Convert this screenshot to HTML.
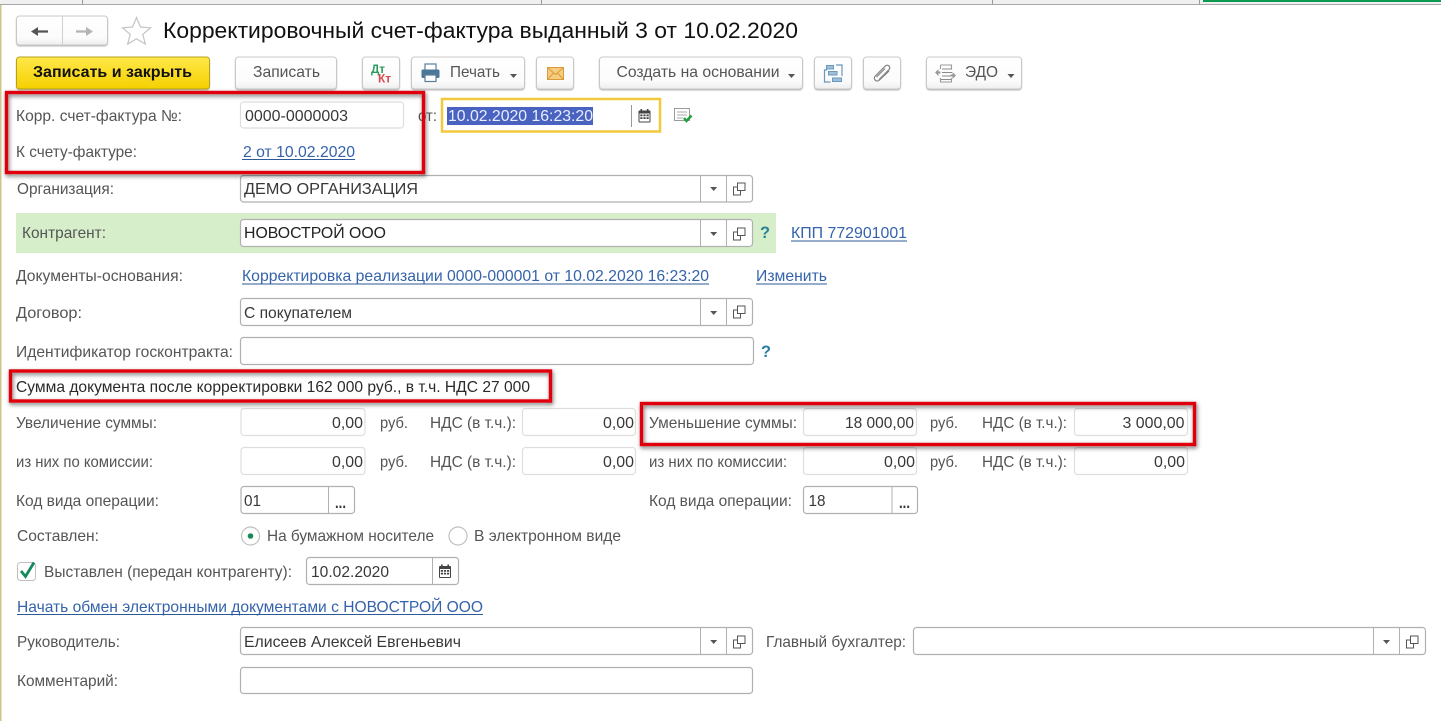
<!DOCTYPE html>
<html><head><meta charset="utf-8"><style>
html,body{margin:0;padding:0;background:#fff;overflow:hidden}
svg{display:block}
text{font-family:"Liberation Sans",sans-serif;font-size:16px;fill:#555}
.v{fill:#383838}
.l{fill:#3563ab}
.f{fill:#fff;stroke:#b0b0b0;stroke-width:1.200}
.n{fill:#fff;stroke:#dedede;stroke-width:1.200}
.b{fill:url(#bt);stroke:#c8c8c8;stroke-width:1}
.d{stroke:#b0b0b0;stroke-width:1}
.u{stroke:#2c5a98;stroke-width:1}
.r{fill:none;stroke:#e0000f;stroke-width:3.4;filter:url(#sh)}
</style></head><body>
<svg width="1441" height="721" viewBox="0 0 1441 721" xmlns="http://www.w3.org/2000/svg">
<defs>
<linearGradient id="bt" x1="0" y1="0" x2="0" y2="1"><stop offset="0" stop-color="#fff"/><stop offset=".75" stop-color="#fbfbfb"/><stop offset="1" stop-color="#eee"/></linearGradient>
<linearGradient id="ye" x1="0" y1="0" x2="0" y2="1"><stop offset="0" stop-color="#ffe84a"/><stop offset="1" stop-color="#f5d000"/></linearGradient>
<filter id="sh" x="-5%" y="-30%" width="110%" height="160%"><feDropShadow dx="1" dy="2" stdDeviation="2.2" flood-color="#000" flood-opacity=".55"/></filter>
<filter id="bs" x="-10%" y="-10%" width="120%" height="130%"><feDropShadow dx="0" dy="1" stdDeviation=".5" flood-color="#000" flood-opacity=".28"/></filter>
<g id="dd"><path d="M-3.500 0h7l-3.500 4z" fill="#555"/></g>
<g id="op" fill="none" stroke="#555" stroke-width="1"><rect x="4.500" y="-6" width="7.500" height="7.500" fill="#fff"/><path d="M4.500 -2H.5V6H7.500V1.500"/></g>
<g id="cal"><rect x="-6" y="-5.500" width="12" height="12" rx="1" fill="#444"/><rect x="-4" y="-7" width="1.600" height="3" fill="#444"/><rect x="2.400" y="-7" width="1.600" height="3" fill="#444"/><path d="M-5 -2.500h10v8h-10z" fill="#fff"/><path d="M-4.200 -1.500h2.200v1.800h-2.200zM-1.100 -1.500h2.200v1.800h-2.200zM2 -1.500h2.200v1.800h-2.200zM-4.200 1.200h2.200v1.800h-2.200zM-1.100 1.200h2.200v1.800h-2.200zM2 1.200h2.200v1.800h-2.200z" fill="#444"/></g>
</defs>

<!-- top strip -->
<rect x="0" y="0" width="1441" height="4" fill="#f0f0f0"/>
<rect x="0" y="4" width="1441" height="1" fill="#a6a6a6"/>
<rect x="82" y="0" width="1" height="4" fill="#999"/><rect x="541" y="0" width="1" height="4" fill="#999"/><rect x="992" y="0" width="1" height="4" fill="#999"/><rect x="1199" y="0" width="1" height="4" fill="#999"/>
<rect x="1203" y="0" width="238" height="2" fill="#0d9a50"/>
<rect x="0" y="5" width="1.500" height="716" fill="#cfc48c"/>

<!-- nav -->
<rect class="b" x="16.500" y="16" width="91" height="29" rx="3" filter="url(#bs)"/>
<line x1="62.500" y1="16" x2="62.500" y2="45" stroke="#d0d0d0"/>
<path d="M31 31.500l7-4.500v3.400h10v2.200h-10v3.400z" fill="#555"/>
<path d="M93 31.500l-7-4.500v3.400h-10v2.200h10v3.400z" fill="#b4b4b4"/>
<path d="M136.500 17.500l4 9.500 10 .8-7.700 6.500 2.500 9.700-8.800-5.200-8.800 5.200 2.500-9.700-7.700-6.500 10-.8z" fill="#fff" stroke="#c4c4c4" stroke-width="1.200"/>
<text x="163" y="38" style="font-size:22.500px;fill:#111" textLength="635" lengthAdjust="spacingAndGlyphs">Корректировочный счет-фактура выданный 3 от 10.02.2020</text>

<!-- toolbar -->
<rect x="16.500" y="57" width="193" height="32" rx="3" fill="url(#ye)" stroke="#b8a21a" filter="url(#bs)"/>
<text x="33" y="77" style="font-weight:bold;fill:#111" textLength="159" lengthAdjust="spacingAndGlyphs">Записать и закрыть</text>
<rect class="b" x="235.500" y="57" width="101" height="32" rx="3" filter="url(#bs)"/>
<text x="253" y="77" textLength="67" lengthAdjust="spacingAndGlyphs">Записать</text>
<rect class="b" x="362.500" y="57" width="37" height="32" rx="3" filter="url(#bs)"/>
<text x="371" y="73" style="font-size:12px;font-weight:bold;fill:#2a9d5c" textLength="14" lengthAdjust="spacingAndGlyphs">Дт</text>
<text x="378" y="82.500" style="font-size:12px;font-weight:bold;fill:#d9484f" textLength="13" lengthAdjust="spacingAndGlyphs">Кт</text>
<rect class="b" x="411.500" y="57" width="113" height="32" rx="3" filter="url(#bs)"/>
<g><rect x="425" y="64" width="11" height="7" fill="#fff" stroke="#5a7f9c" stroke-width="1.200"/><rect x="421.500" y="69.500" width="18" height="8.500" rx="1.500" fill="#4c7898"/><rect x="425" y="75" width="11" height="6.500" fill="#fff" stroke="#5a7f9c" stroke-width="1.200"/></g>
<text x="450" y="77" textLength="50" lengthAdjust="spacingAndGlyphs">Печать</text>
<use href="#dd" x="513.500" y="74"/>
<rect class="b" x="536.500" y="57" width="37" height="32" rx="3" filter="url(#bs)"/>
<rect x="547.500" y="67.500" width="16" height="12" fill="#f6cd7e" stroke="#d99a3a"/><path d="M547.500 67.500l8 7 8-7M547.500 79.500l6-6.500M563.500 79.500l-6-6.500" fill="none" stroke="#d99a3a"/>
<rect class="b" x="599.500" y="57" width="203" height="32" rx="3" filter="url(#bs)"/>
<text x="616.500" y="77" textLength="163" lengthAdjust="spacingAndGlyphs">Создать на основании</text>
<use href="#dd" x="791.500" y="74"/>
<rect class="b" x="814.500" y="57" width="37" height="32" rx="3" filter="url(#bs)"/>
<g fill="#9dc0dc" stroke="#6a98bd"><rect x="826.500" y="65.500" width="7" height="3.500"/><rect x="828.500" y="71.500" width="8.500" height="3.500"/><rect x="832.500" y="78" width="9" height="3.500"/></g>
<path d="M827 70h-2.500v12h6M836 65h6v11" fill="none" stroke="#6a98bd" stroke-width="1.200"/>
<rect class="b" x="863.500" y="57" width="37" height="32" rx="3" filter="url(#bs)"/>
<path d="M889 71l-9.500 9c-3 2.800-7-1-4.200-4l10-10c2.500-2.300 6 1 3.700 3.700l-10 10M885 68.500l-8.500 8.500" fill="none" stroke="#808080" stroke-width="1.200"/>
<rect class="b" x="926.500" y="57" width="95" height="32" rx="3" filter="url(#bs)"/>
<g fill="none" stroke="#9a9a9a" stroke-width="1.100"><path d="M940.500 65h11v4M940.500 65v4M940.500 78v4h11v-4"/><path d="M942 69h10M942 72.500h10M942 76h10M941 79.500h10" stroke="#8a8a8a"/></g>
<path d="M935 72.500l3.500-3.500v2.500h2v2h-2v2.500zM956 75.500l-3.500-3.500v2.500h-2v2h2v2.500z" fill="#999"/>
<text x="965" y="77" textLength="33" lengthAdjust="spacingAndGlyphs">ЭДО</text>
<use href="#dd" x="1011" y="74"/>

<!-- number row -->
<text x="16" y="121" textLength="166" lengthAdjust="spacingAndGlyphs">Корр. счет-фактура №:</text>
<rect class="n" x="240.500" y="102" width="163" height="26" rx="3"/>
<text class="v" x="245" y="121" textLength="103" lengthAdjust="spacingAndGlyphs">0000-0000003</text>
<text x="418" y="121" textLength="19" lengthAdjust="spacingAndGlyphs">от:</text>
<rect x="442" y="99" width="218" height="32.500" fill="#fff" stroke="#f2c93c" stroke-width="2.500"/>
<rect x="447" y="107" width="146" height="18" fill="#4a63c0"/>
<text x="448" y="121" style="fill:#e8eeff" textLength="145" lengthAdjust="spacingAndGlyphs">10.02.2020 16:23:20</text>
<line x1="631.500" y1="105" x2="631.500" y2="127" stroke="#999"/>
<use href="#cal" x="644.500" y="116"/>
<g><rect x="674.500" y="108.500" width="15" height="12" fill="#fff" stroke="#9a9a9a"/><path d="M677 112h10M677 115h10M677 118h6" stroke="#aaa"/><path d="M684 118l2.500 3 5-5.500" fill="none" stroke="#22a03c" stroke-width="2.500"/></g>
<text x="16" y="157" textLength="121" lengthAdjust="spacingAndGlyphs">К счету-фактуре:</text>
<text class="l" x="243" y="157" textLength="112" lengthAdjust="spacingAndGlyphs">2 от 10.02.2020</text>
<line class="u" x1="242" y1="159.500" x2="355" y2="159.500"/>

<!-- org -->
<text x="17" y="194" textLength="97" lengthAdjust="spacingAndGlyphs">Организация:</text>
<rect class="f" x="240.500" y="175.500" width="512" height="26.500" rx="3"/>
<line class="d" x1="700.500" y1="175" x2="700.500" y2="202"/><line class="d" x1="726.500" y1="175" x2="726.500" y2="202"/>
<text class="v" x="244" y="194" textLength="174" lengthAdjust="spacingAndGlyphs">ДЕМО ОРГАНИЗАЦИЯ</text>
<use href="#dd" x="713.700" y="187"/><use href="#op" x="733" y="189"/>

<!-- kontragent -->
<rect x="16" y="213" width="760" height="40" fill="#d6efca"/>
<text x="22" y="238" textLength="84" lengthAdjust="spacingAndGlyphs">Контрагент:</text>
<rect class="f" x="240.500" y="219.500" width="512" height="27" rx="3"/>
<line class="d" x1="700.500" y1="220" x2="700.500" y2="246"/><line class="d" x1="726.500" y1="220" x2="726.500" y2="246"/>
<text x="244" y="238" style="fill:#222" textLength="142" lengthAdjust="spacingAndGlyphs">НОВОСТРОЙ ООО</text>
<use href="#dd" x="713.700" y="232"/><use href="#op" x="733" y="234"/>
<text x="760" y="238" style="font-size:17px;font-weight:bold;fill:#2a8296" textLength="10" lengthAdjust="spacingAndGlyphs">?</text>
<text class="l" x="791" y="238" textLength="116" lengthAdjust="spacingAndGlyphs">КПП 772901001</text>
<line class="u" x1="791" y1="241" x2="907" y2="241"/>

<!-- docs -->
<text x="16" y="281" textLength="167" lengthAdjust="spacingAndGlyphs">Документы-основания:</text>
<text class="l" x="242" y="281" textLength="467" lengthAdjust="spacingAndGlyphs">Корректировка реализации 0000-000001 от 10.02.2020 16:23:20</text>
<line class="u" x1="242" y1="284" x2="709" y2="284"/>
<text class="l" x="756" y="281" textLength="71" lengthAdjust="spacingAndGlyphs">Изменить</text>
<line class="u" x1="756" y1="284" x2="827" y2="284"/>

<!-- dogovor -->
<text x="16" y="318" textLength="66" lengthAdjust="spacingAndGlyphs">Договор:</text>
<rect class="f" x="240.500" y="298.500" width="512" height="27" rx="3"/>
<line class="d" x1="700.500" y1="298" x2="700.500" y2="325"/><line class="d" x1="726.500" y1="298" x2="726.500" y2="325"/>
<text class="v" x="244" y="318" textLength="108" lengthAdjust="spacingAndGlyphs">С покупателем</text>
<use href="#dd" x="713.700" y="311"/><use href="#op" x="733" y="312"/>

<!-- ident -->
<text x="16" y="357" textLength="217" lengthAdjust="spacingAndGlyphs">Идентификатор госконтракта:</text>
<rect class="f" x="240.500" y="337.500" width="513" height="27" rx="3"/>
<text x="761" y="357" style="font-size:17px;font-weight:bold;fill:#2a7ea6" textLength="10" lengthAdjust="spacingAndGlyphs">?</text>

<!-- sum -->
<text x="16" y="392" style="fill:#2a2a2a" textLength="514" lengthAdjust="spacingAndGlyphs">Сумма документа после корректировки 162 000 руб., в т.ч. НДС 27 000</text>

<text x="16" y="428" textLength="141" lengthAdjust="spacingAndGlyphs">Увеличение суммы:</text>
<rect class="n" x="241" y="408.500" width="124" height="27" rx="3"/>
<text class="v" x="332" y="428" textLength="31" lengthAdjust="spacingAndGlyphs">0,00</text>
<text x="380" y="428" textLength="28" lengthAdjust="spacingAndGlyphs">руб.</text>
<text x="430" y="428" textLength="86" lengthAdjust="spacingAndGlyphs">НДС (в т.ч.):</text>
<rect class="n" x="522.500" y="408.500" width="113" height="27" rx="3"/>
<text class="v" x="603" y="428" textLength="31" lengthAdjust="spacingAndGlyphs">0,00</text>

<text x="16" y="467" textLength="137" lengthAdjust="spacingAndGlyphs">из них по комиссии:</text>
<rect class="n" x="241" y="447.500" width="124" height="27" rx="3"/>
<text class="v" x="332" y="467" textLength="31" lengthAdjust="spacingAndGlyphs">0,00</text>
<text x="380" y="467" textLength="28" lengthAdjust="spacingAndGlyphs">руб.</text>
<text x="430" y="467" textLength="86" lengthAdjust="spacingAndGlyphs">НДС (в т.ч.):</text>
<rect class="n" x="522.500" y="447.500" width="113" height="27" rx="3"/>
<text class="v" x="603" y="467" textLength="31" lengthAdjust="spacingAndGlyphs">0,00</text>

<text x="16" y="506" textLength="143" lengthAdjust="spacingAndGlyphs">Код вида операции:</text>
<rect class="f" x="241" y="486.500" width="113.500" height="27" rx="3"/>
<line class="d" x1="328.500" y1="486" x2="328.500" y2="513"/>
<text class="v" x="244" y="506" textLength="17" lengthAdjust="spacingAndGlyphs">01</text>
<text x="335" y="508" style="fill:#333;font-weight:bold" textLength="11" lengthAdjust="spacingAndGlyphs">...</text>

<!-- right -->
<text x="649" y="428" textLength="148" lengthAdjust="spacingAndGlyphs">Уменьшение суммы:</text>
<rect class="n" x="803.500" y="408.500" width="113" height="27" rx="3"/>
<text class="v" x="845" y="428" textLength="69" lengthAdjust="spacingAndGlyphs">18 000,00</text>
<text x="930" y="428" textLength="28" lengthAdjust="spacingAndGlyphs">руб.</text>
<text x="982" y="428" textLength="85" lengthAdjust="spacingAndGlyphs">НДС (в т.ч.):</text>
<rect class="n" x="1074.500" y="408.500" width="113" height="27" rx="3"/>
<text class="v" x="1122.500" y="428" textLength="62" lengthAdjust="spacingAndGlyphs">3 000,00</text>

<text x="649" y="467" textLength="138" lengthAdjust="spacingAndGlyphs">из них по комиссии:</text>
<rect class="n" x="803.500" y="447.500" width="113" height="27" rx="3"/>
<text class="v" x="884" y="467" textLength="31" lengthAdjust="spacingAndGlyphs">0,00</text>
<text x="930" y="467" textLength="28" lengthAdjust="spacingAndGlyphs">руб.</text>
<text x="982" y="467" textLength="85" lengthAdjust="spacingAndGlyphs">НДС (в т.ч.):</text>
<rect class="n" x="1074.500" y="447.500" width="113" height="27" rx="3"/>
<text class="v" x="1154" y="467" textLength="31" lengthAdjust="spacingAndGlyphs">0,00</text>

<text x="649" y="506" textLength="143" lengthAdjust="spacingAndGlyphs">Код вида операции:</text>
<rect class="f" x="803.500" y="486.500" width="114" height="27" rx="3"/>
<line class="d" x1="892" y1="486" x2="892" y2="513"/>
<text class="v" x="808.500" y="506" textLength="17" lengthAdjust="spacingAndGlyphs">18</text>
<text x="899" y="508" style="fill:#333;font-weight:bold" textLength="11" lengthAdjust="spacingAndGlyphs">...</text>

<!-- radios -->
<text x="17" y="541" textLength="82" lengthAdjust="spacingAndGlyphs">Составлен:</text>
<circle cx="250.500" cy="536" r="9" fill="#fff" stroke="#c0c0c0" stroke-width="1.200"/><circle cx="250.500" cy="536" r="2.800" fill="#1a8a55"/>
<text x="267" y="541" textLength="167" lengthAdjust="spacingAndGlyphs">На бумажном носителе</text>
<circle cx="458" cy="536" r="9" fill="#fff" stroke="#c0c0c0" stroke-width="1.200"/>
<text x="474" y="541" textLength="147" lengthAdjust="spacingAndGlyphs">В электронном виде</text>

<!-- checkbox -->
<rect x="17.500" y="562.500" width="18" height="18" rx="3" fill="#fff" stroke="#c0c0c0"/>
<path d="M21 571l4.500 5.500 8.500-14" fill="none" stroke="#138a5b" stroke-width="2.800"/>
<text x="44" y="577" textLength="248" lengthAdjust="spacingAndGlyphs">Выставлен (передан контрагенту):</text>
<rect class="f" x="306.500" y="557.500" width="152" height="27" rx="3"/>
<line class="d" x1="432.500" y1="557" x2="432.500" y2="584"/>
<text class="v" x="311" y="577" textLength="78" lengthAdjust="spacingAndGlyphs">10.02.2020</text>
<use href="#cal" x="445" y="571.500"/>

<text class="l" x="17" y="612" textLength="466" lengthAdjust="spacingAndGlyphs">Начать обмен электронными документами с НОВОСТРОЙ ООО</text>
<line class="u" x1="17" y1="614.500" x2="483" y2="614.500"/>

<!-- rukovoditel -->
<text x="17" y="647" textLength="103" lengthAdjust="spacingAndGlyphs">Руководитель:</text>
<rect class="f" x="240.500" y="627.500" width="512" height="27" rx="3"/>
<line class="d" x1="700.500" y1="627" x2="700.500" y2="654"/><line class="d" x1="726.500" y1="627" x2="726.500" y2="654"/>
<text class="v" x="244" y="647" textLength="217" lengthAdjust="spacingAndGlyphs">Елисеев Алексей Евгеньевич</text>
<use href="#dd" x="713.700" y="640"/><use href="#op" x="733" y="642"/>
<text x="766" y="647" textLength="140" lengthAdjust="spacingAndGlyphs">Главный бухгалтер:</text>
<rect class="f" x="913.500" y="627.500" width="512" height="27" rx="3"/>
<line class="d" x1="1373.500" y1="627" x2="1373.500" y2="654"/><line class="d" x1="1399.500" y1="627" x2="1399.500" y2="654"/>
<use href="#dd" x="1386.500" y="640"/><use href="#op" x="1406" y="642"/>

<text x="17" y="686" textLength="101" lengthAdjust="spacingAndGlyphs">Комментарий:</text>
<rect class="f" x="240.500" y="667.500" width="512" height="26" rx="3"/>

<!-- red annotations -->
<rect class="r" x="6.500" y="92.500" width="417" height="80"/>
<rect class="r" x="10.500" y="371" width="540" height="30"/>
<rect class="r" x="641.500" y="403.500" width="553" height="41"/>
</svg>
</body></html>
